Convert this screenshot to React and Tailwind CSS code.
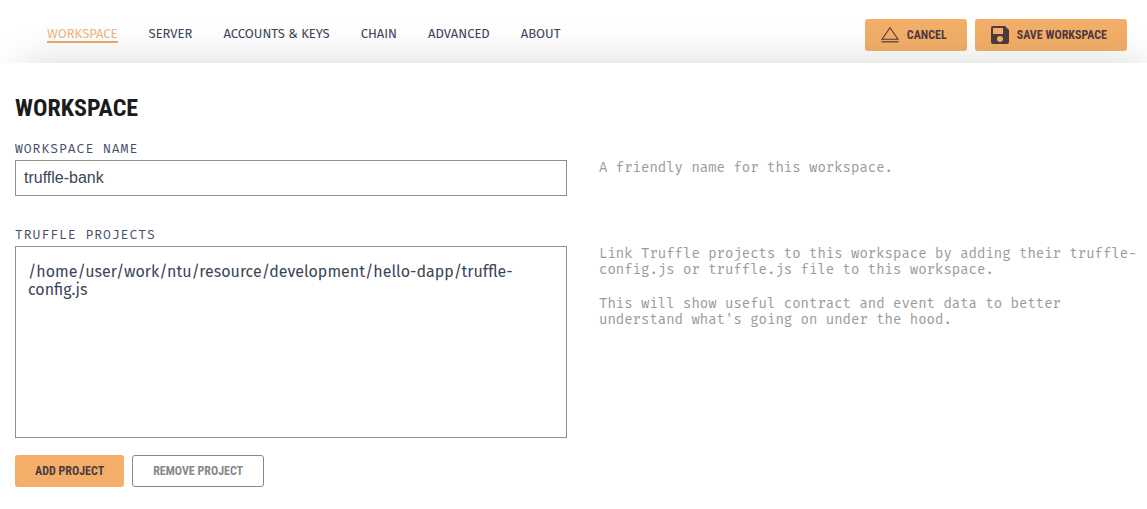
import React from "react";

const tabs = ["WORKSPACE", "SERVER", "ACCOUNTS & KEYS", "CHAIN", "ADVANCED", "ABOUT"];

const projects = [
  "/home/user/work/ntu/resource/development/hello-dapp/truffle-config.js",
];

const condensed =
  "font-['Roboto_Condensed','Liberation_Sans_Narrow','Roboto',sans-serif] font-bold";

const filledButton =
  "flex h-8 items-center gap-2 rounded-[3px] bg-[#f3af69] text-xs text-[#4e3b40]";

const fieldLabel =
  "block text-[13px] leading-4 tracking-[1px] text-[#444e63] font-['Fira_Mono','Liberation_Mono',monospace]";

const help =
  "text-sm leading-4 text-[#9a9a9a] font-['Fira_Mono','Liberation_Mono',monospace]";

function EjectIcon() {
  return (
    <svg viewBox="0 0 18 18" className="size-[18px]" fill="none" stroke="currentColor" aria-hidden="true">
      <path d="M9 1.8 L17 13.2 H1 Z" strokeWidth="1.1" />
      <path d="M0.5 15.8 H17.5" strokeWidth="1.2" />
    </svg>
  );
}

function SaveIcon() {
  return (
    <svg viewBox="0 0 18 18" className="size-[18px]" fill="currentColor" aria-hidden="true">
      <path
        fillRule="evenodd"
        d="M2 0 H14 L18 4 V16 A2 2 0 0 1 16 18 H2 A2 2 0 0 1 0 16 V2 A2 2 0 0 1 2 0 Z M2 2 V8 H12 V2 Z M9 10 A3 3 0 1 0 9 16 A3 3 0 1 0 9 10 Z"
      />
    </svg>
  );
}

function Header() {
  return (
    <header className="relative flex items-center justify-between overflow-hidden pt-[19px] pr-5 pb-3 pl-[47px]">
      <nav className="flex gap-[31px] font-['Fira_Sans','Noto_Sans',sans-serif] text-[13px] leading-[14px]">
        {tabs.map((tab, i) => (
          <a
            key={tab}
            href={"#" + tab.toLowerCase().replace(/[^a-z]+/g, "-")}
            aria-current={i === 0 ? "page" : undefined}
            className={
              i === 0
                ? "border-b-2 border-[#e9ad6c] text-[#efb67c]"
                : "border-b-2 border-transparent text-[#3b4559]"
            }
          >
            {tab}
          </a>
        ))}
      </nav>
      <div className="flex gap-2">
        <button type="button" className={`${filledButton} ${condensed} pr-5 pl-4`}>
          <EjectIcon />
          CANCEL
        </button>
        <button type="button" className={`${filledButton} ${condensed} pr-5 pl-4`}>
          <SaveIcon />
          SAVE WORKSPACE
        </button>
      </div>
      <div className="pointer-events-none absolute top-full right-1 left-6 h-16 shadow-[0_0_43px_rgba(0,0,0,0.16)]" />
    </header>
  );
}

export default function App() {
  return (
    <div className="bg-white">
      <Header />
      <main className="pt-[29px] pb-5 pl-[15px]">
        <h1 className={`${condensed} text-2xl leading-8 text-[#1c1c1c]`}>WORKSPACE</h1>

        <section className="mt-[17px] grid grid-cols-[138fr_137fr] gap-x-8">
          <div>
            <label htmlFor="workspace-name" className={fieldLabel}>
              WORKSPACE NAME
            </label>
            <input
              id="workspace-name"
              type="text"
              defaultValue="truffle-bank"
              className="mt-[3px] block h-9 w-full border border-[#8f8f8f] px-2 font-['Liberation_Sans',Arial,sans-serif] text-base text-[#3b4559]"
            />
          </div>
          <p className={`${help} pt-[19px]`}>A friendly name for this workspace.</p>
        </section>

        <section className="mt-[31px] grid grid-cols-[138fr_137fr] gap-x-8">
          <div>
            <h2 id="projects-label" className={fieldLabel}>
              TRUFFLE PROJECTS
            </h2>
            <ul
              aria-labelledby="projects-label"
              className="mt-[3px] h-48 overflow-y-auto border border-[#8f8f8f] px-3 py-4 font-['Fira_Sans','Noto_Sans',sans-serif] text-base leading-[18px] text-[#3b4559]"
            >
              {projects.map((path) => (
                <li key={path}>{path}</li>
              ))}
            </ul>
            <div className="mt-[17px] flex gap-2">
              <button type="button" className={`${filledButton} ${condensed} px-5`}>
                ADD PROJECT
              </button>
              <button
                type="button"
                className={`${condensed} h-8 rounded-[3px] border border-[#888] px-5 text-xs text-[#888]`}
              >
                REMOVE PROJECT
              </button>
            </div>
          </div>
          <div className={`${help} flex flex-col gap-[18px] pt-[19px]`}>
            <p>
              Link Truffle projects to this workspace by adding their truffle-config.js or
              truffle.js file to this workspace.
            </p>
            <p>
              This will show useful contract and event data to better understand what's going
              on under the hood.
            </p>
          </div>
        </section>
      </main>
    </div>
  );
}
